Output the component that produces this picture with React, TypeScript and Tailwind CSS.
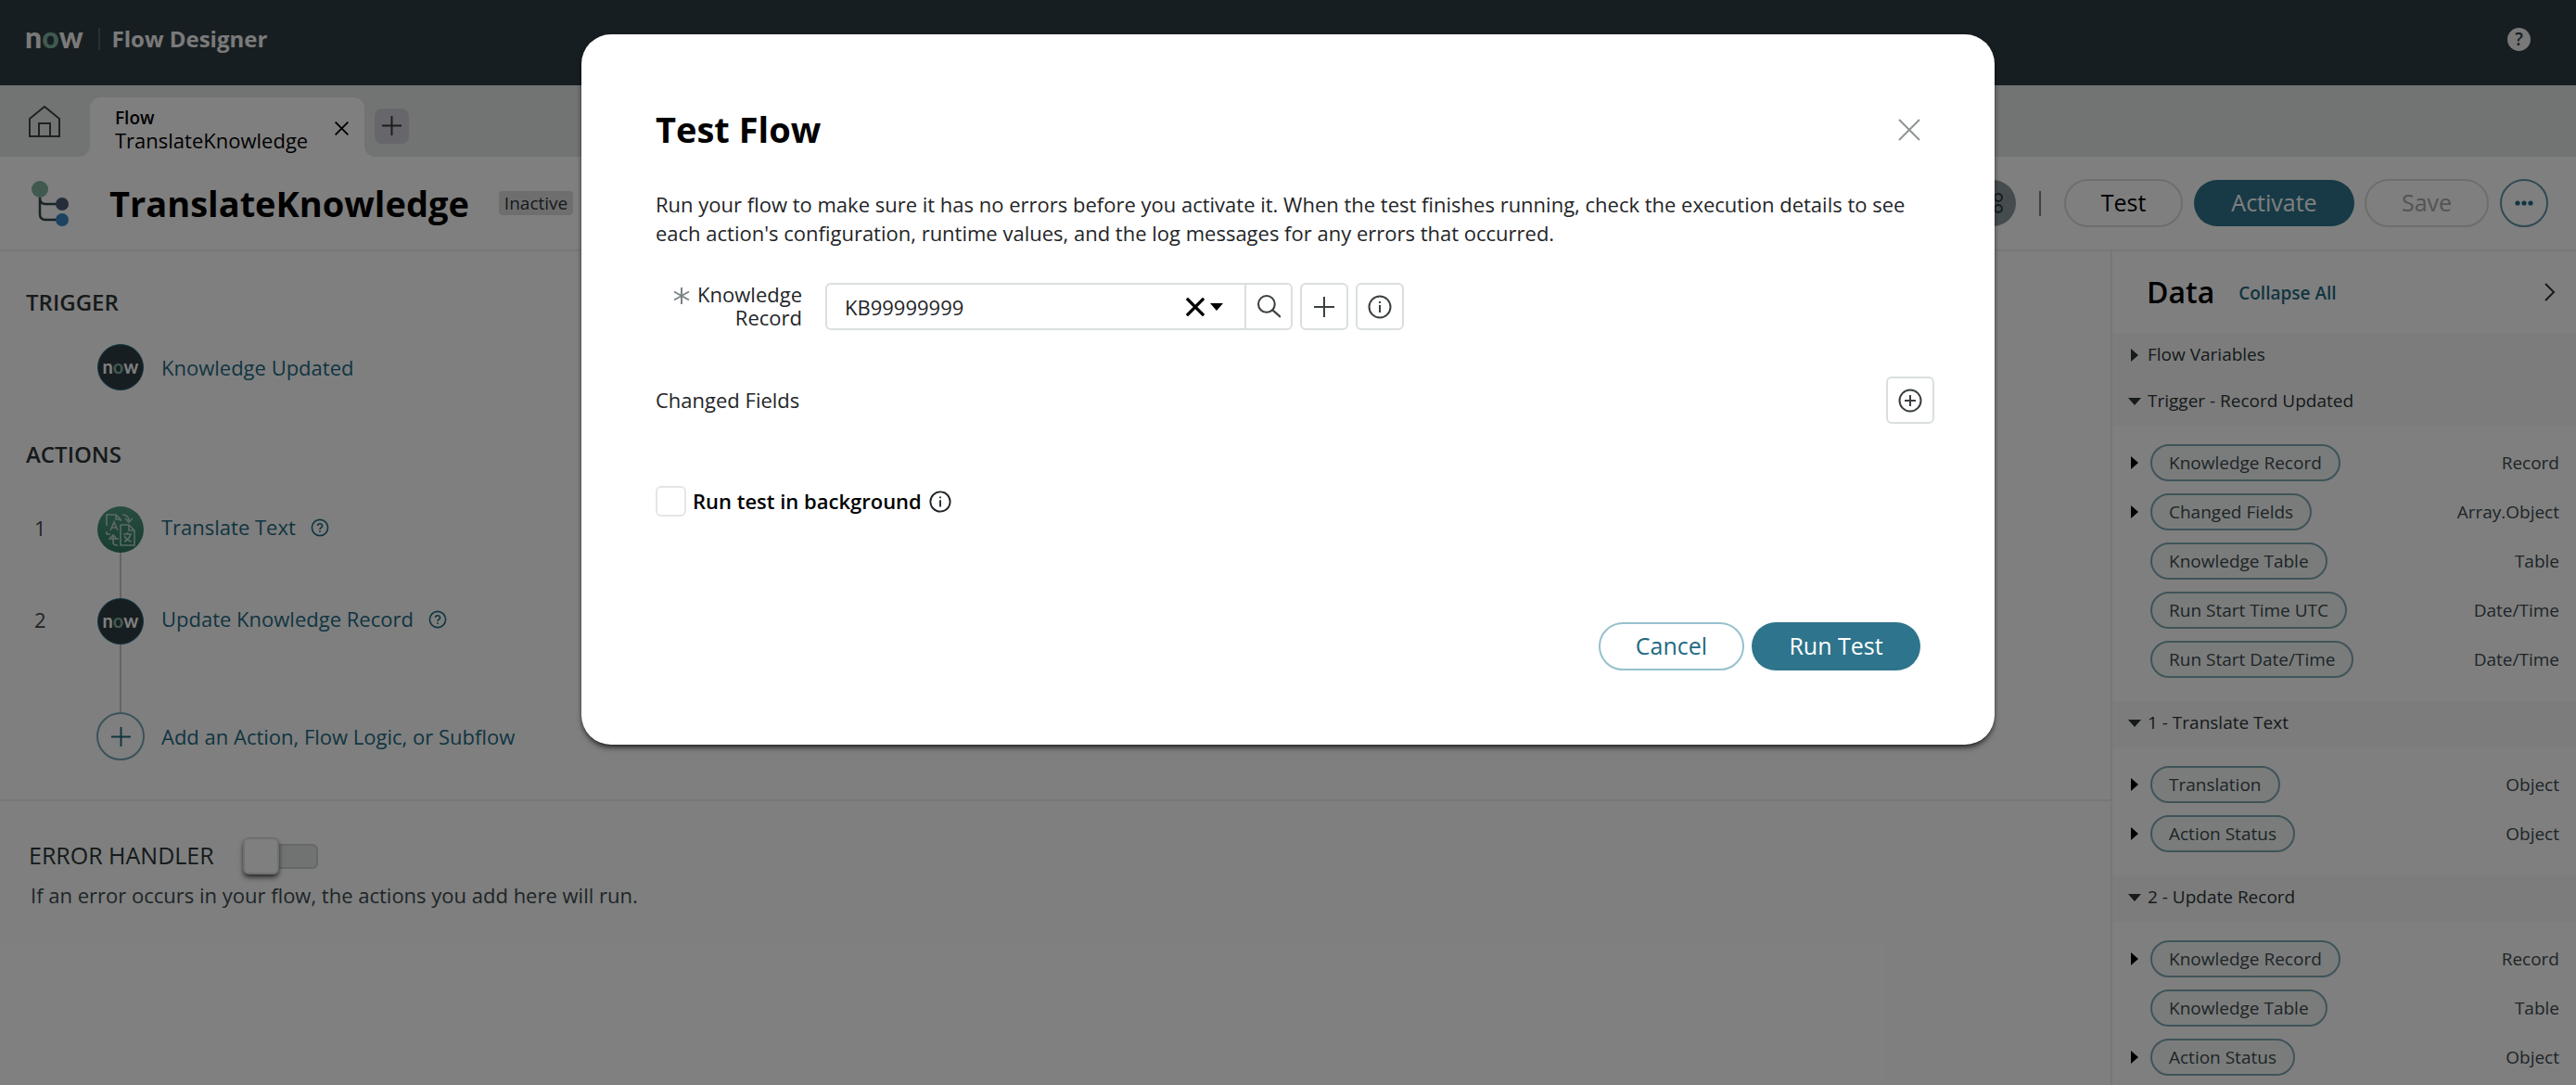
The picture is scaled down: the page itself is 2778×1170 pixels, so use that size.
import React from 'react';

interface PillItem {
  name: string;
  type: string;
  expandable?: boolean;
}

interface DataSection {
  title: string;
  open: boolean;
  items: PillItem[];
}

const sections: DataSection[] = [
  { title: 'Flow Variables', open: false, items: [] },
  {
    title: 'Trigger - Record Updated',
    open: true,
    items: [
      { name: 'Knowledge Record', type: 'Record', expandable: true },
      { name: 'Changed Fields', type: 'Array.Object', expandable: true },
      { name: 'Knowledge Table', type: 'Table' },
      { name: 'Run Start Time UTC', type: 'Date/Time' },
      { name: 'Run Start Date/Time', type: 'Date/Time' },
    ],
  },
  {
    title: '1 - Translate Text',
    open: true,
    items: [
      { name: 'Translation', type: 'Object', expandable: true },
      { name: 'Action Status', type: 'Object', expandable: true },
    ],
  },
  {
    title: '2 - Update Record',
    open: true,
    items: [
      { name: 'Knowledge Record', type: 'Record', expandable: true },
      { name: 'Knowledge Table', type: 'Table' },
      { name: 'Action Status', type: 'Object', expandable: true },
    ],
  },
];

const CrossIcon: React.FC<{ className?: string; strokeWidth?: number }> = ({ className, strokeWidth = 2 }) => (
  <svg viewBox="0 0 24 24" className={className} fill="none" stroke="currentColor" strokeWidth={strokeWidth}>
    <path d="M1 1L23 23M23 1L1 23" />
  </svg>
);

const PlusIcon: React.FC<{ className?: string }> = ({ className }) => (
  <svg viewBox="0 0 22 22" className={className} fill="none" stroke="currentColor" strokeWidth="2">
    <path d="M11 0V22M0 11H22" />
  </svg>
);

const InfoIcon: React.FC<{ className?: string }> = ({ className }) => (
  <svg viewBox="0 0 26 26" className={className} fill="none" stroke="currentColor" strokeWidth="2">
    <circle cx="13" cy="13" r="11.5" />
    <path d="M13 11V19M13 7V9" />
  </svg>
);

const HelpIcon: React.FC<{ className?: string }> = ({ className }) => (
  <svg viewBox="0 0 20 20" className={className} fill="none" stroke="currentColor" strokeWidth="1.6">
    <circle cx="10" cy="10" r="8.6" />
    <path d="M7.5 8a2.5 2.3 0 1 1 3.6 2.1q-1.1.6-1.1 1.9M10 13.2V15" />
  </svg>
);

const Triangle: React.FC<{ open: boolean }> = ({ open }) => (
  <svg viewBox="0 0 14 14" className="h-[14px] w-[14px]" fill="currentColor">
    <path d={open ? 'M0 3H14L7 11Z' : 'M3 0L11 7L3 14Z'} />
  </svg>
);

const NowBadge: React.FC = () => (
  <span className="flex h-[50px] w-[50px] shrink-0 items-center justify-center rounded-full border border-[#27708a] bg-[#2e3d42] pb-[3px] font-['Lato',sans-serif] text-[20px] leading-none font-bold text-white">
    n<span className="text-[#81b5a1]">o</span>w
  </span>
);

const TranslateBadge: React.FC = () => (
  <span className="flex h-[50px] w-[50px] shrink-0 items-center justify-center rounded-full bg-linear-to-b from-[#4f9a80] to-[#2f7a62]">
    <svg viewBox="0 0 32 36" className="h-[36px] w-[32px]" fill="none" stroke="#b9d3c8" strokeWidth="1.6">
      <path d="M1 14V2H11L16 7V9M11 2V7H16" />
      <path d="M5 19L9 10L13 19M6.5 16H11.5" />
      <path d="M16 13H25L31 19V35H16ZM25 13V19H31" />
      <path d="M19 23H28M23.5 21V23M20 31Q25 29 27 23M20 25Q23 30 28 31" />
      <path d="M18 2Q25 2 25 9M21 6L25 10L29 6" />
      <path d="M1 20V23H5M4 28L8 24L12 28M3 28H14M8 25V32Q8 35 13 35" />
    </svg>
  </span>
);

const FlowIcon: React.FC = () => (
  <svg viewBox="0 0 42 50" className="h-[50px] w-[42px]" fill="none">
    <path d="M10 16V37Q10 43 16 43H34M10 19Q10 26 16 26H34" stroke="#33464b" strokeWidth="2.5" />
    <circle cx="10" cy="10" r="9" fill="#81b5a1" />
    <circle cx="34" cy="26" r="7" fill="#4a5874" />
    <circle cx="34" cy="43" r="7" fill="#3b86c0" />
  </svg>
);

const IconButton: React.FC<{ label: string; className?: string; children: React.ReactNode }> = ({
  label,
  className = 'rounded-md',
  children,
}) => (
  <button
    aria-label={label}
    className={`flex h-[51px] w-[52px] items-center justify-center border-2 border-[#dadfde] bg-white text-[#3a3f41] ${className}`}
  >
    {children}
  </button>
);

const Step: React.FC<{ index: number; label: string; icon: React.ReactNode }> = ({ index, label, icon }) => (
  <div className="flex h-[50px] items-center">
    <span className="w-[105px] pb-[4px] pl-[37px] text-[22px] text-[#3c4a4f]">{index}</span>
    {icon}
    <a href="#" className="ml-[19px] pb-[5px] text-[22px] text-[#1f6a83]">{label}</a>
    <button aria-label={`Help for ${label}`} className="ml-[16px] pb-[4px] text-[#1f6a83]">
      <HelpIcon className="h-[20px] w-[20px]" />
    </button>
  </div>
);

const Header: React.FC = () => (
  <header className="flex h-[92px] shrink-0 items-center bg-[#2e3d42] pr-[49px] pb-[8px] pl-[27px]">
    <span className="flex items-end pb-[4px] font-['Lato',sans-serif] text-[32px] leading-none font-black text-[#f4f4f4]">
      n<span className="text-[#81b5a1]">o</span>w
    </span>
    <span className="ml-[16px] h-[24px] w-[2px] bg-[#51636a]" />
    <h1 className="ml-[13px] text-[24px] font-bold text-[#f4f4f4]">Flow Designer</h1>
    <button
      aria-label="Help"
      className="ml-auto flex h-[25px] w-[25px] items-center justify-center rounded-full bg-[#f0f0f0] text-[19px] leading-none font-semibold text-[#2e3d42]"
    >
      ?
    </button>
  </header>
);

const TabBar: React.FC = () => (
  <nav className="flex h-[77px] shrink-0 bg-white">
    <div className="flex w-[97px] items-center rounded-br-xl bg-[#e4e9e7] pl-[31px]">
      <a href="#" aria-label="Home">
        <svg viewBox="0 0 34 34" className="h-[34px] w-[34px]" fill="none" stroke="#3c4447" strokeWidth="2">
          <path d="M1 14L17 1L33 14V33H1ZM11 33V19H23V33" />
        </svg>
      </a>
    </div>
    <div className="bg-[#e4e9e7] pt-[13px]">
      <div className="flex h-full w-[296px] items-center rounded-t-xl bg-white pt-[3px] pr-[17px] pl-[27px]">
        <a href="#" className="flex flex-col leading-[24px] text-black">
          <span className="text-[19px] font-semibold">Flow</span>
          <span className="text-[22px]">TranslateKnowledge</span>
        </a>
        <button aria-label="Close tab" className="ml-auto">
          <CrossIcon className="h-[15px] w-[15px]" strokeWidth={3} />
        </button>
      </div>
    </div>
    <div className="flex flex-1 items-center rounded-bl-xl bg-[#e4e9e7] pt-[10px] pl-[11px]">
      <button aria-label="New tab" className="flex h-[38px] w-[37px] items-center justify-center rounded-lg bg-[#ceced6] text-[#33383a]">
        <PlusIcon className="h-[21px] w-[21px]" />
      </button>
    </div>
  </nav>
);

const TitleBar: React.FC = () => (
  <div className="flex h-[102px] shrink-0 items-center border-b-2 border-[#eef1f0] bg-white pr-[30px] pl-[33px]">
    <FlowIcon />
    <h2 className="ml-[43px] text-[38px] font-bold text-black">TranslateKnowledge</h2>
    <span className="ml-[32px] rounded-sm bg-[#dcdcdc] px-[6px] text-[19px] leading-[26px] text-[#2c3437]">Inactive</span>
    <div className="ml-auto flex items-center">
      <button aria-label="View diagram" className="flex h-[50px] w-[50px] items-center justify-center rounded-full bg-[#8b989b]">
        <svg viewBox="0 0 24 24" className="h-[24px] w-[24px]" fill="none" stroke="#2e3d42" strokeWidth="2">
          <path d="M4 12H14M4 4H14M4 20H14" />
          <circle cx="18" cy="6" r="4" />
          <circle cx="18" cy="18" r="4" />
        </svg>
      </button>
      <span className="mx-[25px] h-[27px] w-[2px] bg-[#7b8487]" />
      <button className="h-[52px] w-[128px] rounded-full border-2 border-[#d6dedd] text-[25px] text-black">Test</button>
      <button className="ml-[12px] h-[50px] w-[173px] rounded-full bg-[#2e748c] text-[25px] text-white">Activate</button>
      <button className="ml-[11px] h-[52px] w-[134px] rounded-full border-2 border-[#d9dddd] text-[25px] text-[#a5a9ab]" disabled>
        Save
      </button>
      <button aria-label="More options" className="ml-[12px] flex h-[52px] w-[52px] items-center justify-center rounded-full border-2 border-[#5e95a8]">
        <svg viewBox="0 0 20 6" className="h-[6px] w-[20px]" fill="#1f6a83">
          <circle cx="3" cy="3" r="2.6" />
          <circle cx="10" cy="3" r="2.6" />
          <circle cx="17" cy="3" r="2.6" />
        </svg>
      </button>
    </div>
  </div>
);

const FlowCanvas: React.FC = () => (
  <main className="min-w-0 flex-1">
    <section className="border-b-2 border-[#eceeee] pt-[39px] pb-[42px]">
      <h3 className="pl-[28px] text-[24px] leading-[32px] font-semibold text-[#2c3437]">TRIGGER</h3>
      <div className="mt-[29px] flex h-[50px] items-center pl-[105px]">
        <NowBadge />
        <a href="#" className="ml-[19px] text-[22px] text-[#1f6a83]">Knowledge Updated</a>
      </div>
      <h3 className="mt-[53px] pl-[28px] text-[24px] leading-[32px] font-semibold text-[#2c3437]">ACTIONS</h3>
      <div className="mt-[40px]">
        <Step index={1} label="Translate Text" icon={<TranslateBadge />} />
        <div className="ml-[129px] h-[49px] w-[2px] bg-[#c9c9c9]" />
        <Step index={2} label="Update Knowledge Record" icon={<NowBadge />} />
        <div className="ml-[129px] h-[73px] w-[2px] bg-[#c9c9c9]" />
        <button className="ml-[104px] flex h-[52px] items-center text-[22px] text-[#1f6a83]">
          <span className="mr-[18px] flex h-[52px] w-[52px] items-center justify-center rounded-full border-2 border-[#76a5b4]">
            <PlusIcon className="h-[21px] w-[21px]" />
          </span>
          Add an Action, Flow Logic, or Subflow
        </button>
      </div>
    </section>
    <section className="pt-[39px] pl-[31px]">
      <label className="flex h-[40px] items-center text-[25px] text-[#2c3437]">
        ERROR HANDLER
        <input type="checkbox" role="switch" className="peer sr-only" />
        <span className="ml-[31px] flex h-[40px] items-center">
          <span className="z-10 h-[40px] w-[39px] rounded-md border-2 border-[#dde1e1] bg-white shadow-md shadow-black/60" />
          <span className="-ml-[3px] h-[27px] w-[45px] rounded-r-md border-2 border-[#c9d0ce] bg-[#e0e6e3]" />
        </span>
      </label>
      <p className="mt-[6px] pl-[2px] text-[22px] leading-[32px] text-[#3c4a4f]">
        If an error occurs in your flow, the actions you add here will run.
      </p>
    </section>
  </main>
);

const DataPanel: React.FC = () => (
  <aside className="w-[502px] shrink-0 overflow-hidden border-l-2 border-[#eceeee] text-[19px]">
    <div className="flex h-[88px] items-center pr-[22px] pl-[37px]">
      <h3 className="text-[32px] font-semibold text-black">Data</h3>
      <button className="ml-[26px] pt-[2px] font-semibold text-[#1f6a83]">Collapse All</button>
      <button aria-label="Hide data panel" className="ml-auto">
        <svg viewBox="0 0 12 20" className="h-[20px] w-[12px]" fill="none" stroke="#2c3437" strokeWidth="2">
          <path d="M1 1L10 10L1 19" />
        </svg>
      </button>
    </div>
    {sections.map((section) => (
      <div key={section.title}>
        <button className="flex h-[50px] w-full items-center bg-[#f8f9f9] pb-[3px] pl-[17px] text-[#2c3437]">
          <Triangle open={section.open} />
          <span className="ml-[7px]">{section.title}</span>
        </button>
        {section.items.length > 0 && (
          <ul className="flex flex-col gap-[13px] pt-[20px] pr-[18px] pb-[25px] pl-[17px]">
            {section.items.map((item) => (
              <li key={item.name} className="flex items-center text-[#3c4a4f]">
                <span className="w-[24px] text-black">{item.expandable && <Triangle open={false} />}</span>
                <span className="h-[40px] rounded-full border-2 border-[#7fa8b4] bg-[#f4f8f7] px-[18px] leading-[37px]">{item.name}</span>
                <span className="ml-auto">{item.type}</span>
              </li>
            ))}
          </ul>
        )}
      </div>
    ))}
  </aside>
);

const TestFlowDialog: React.FC = () => (
  <div
    role="dialog"
    aria-modal="true"
    aria-labelledby="test-flow-title"
    className="w-full max-w-[1524px] rounded-[32px] bg-white px-[80px] pt-[77px] pb-[80px] text-[22px] text-[#1f2527] shadow-md shadow-black/60"
  >
    <div className="flex h-[52px] items-center justify-between">
      <h2 id="test-flow-title" className="pb-[2px] text-[38px] font-bold text-black">Test Flow</h2>
      <button aria-label="Close" className="text-[#8f9496]">
        <CrossIcon className="h-[24px] w-[24px]" />
      </button>
    </div>
    <p className="mt-[39px] leading-[31px]">
      Run your flow to make sure it has no errors before you activate it. When the test finishes running, check the execution
      details to see each action&apos;s configuration, runtime values, and the log messages for any errors that occurred.
    </p>

    <div className="mt-[38px] flex">
      <div className="flex w-[158px] justify-end">
        <svg viewBox="0 0 18 18" className="mt-[5px] mr-[8px] h-[18px] w-[18px]" stroke="#7b8487" strokeWidth="2">
          <path d="M9 0V18M1 4.5L17 13.5M17 4.5L1 13.5" />
        </svg>
        <label htmlFor="record" className="text-right leading-[25px]">
          Knowledge<br />Record
        </label>
      </div>
      <div className="ml-[25px] flex h-[51px] w-[454px] items-center rounded-l-md border-2 border-[#dadfde] pr-[23px]">
        <input id="record" type="text" defaultValue="KB99999999" className="h-full min-w-0 flex-1 pl-[19px] outline-none" />
        <button aria-label="Clear value" className="text-black">
          <CrossIcon className="h-[20px] w-[20px]" strokeWidth={4} />
        </button>
        <button aria-label="Show options" className="ml-[6px] text-black">
          <svg viewBox="0 0 14 8" className="h-[8px] w-[14px]" fill="currentColor">
            <path d="M0 0H14L7 8Z" />
          </svg>
        </button>
      </div>
      <IconButton label="Look up record" className="-ml-[2px] rounded-r-md">
        <svg viewBox="0 0 24 24" className="h-[25px] w-[25px]" fill="none" stroke="currentColor" strokeWidth="2">
          <circle cx="9.5" cy="9.5" r="8.5" />
          <path d="M15.5 15.5L24 23" />
        </svg>
      </IconButton>
      <div className="ml-[8px] flex gap-[8px]">
        <IconButton label="New record">
          <PlusIcon className="h-[22px] w-[22px]" />
        </IconButton>
        <IconButton label="Record details">
          <InfoIcon className="h-[26px] w-[26px]" />
        </IconButton>
      </div>
    </div>

    <div className="mt-[50px] -mr-[15px] flex items-center justify-between">
      <span>Changed Fields</span>
      <IconButton label="Add changed field">
        <svg viewBox="0 0 26 26" className="h-[26px] w-[26px]" fill="none" stroke="currentColor" strokeWidth="2">
          <circle cx="13" cy="13" r="11.5" />
          <path d="M13 7V19M7 13H19" />
        </svg>
      </IconButton>
    </div>

    <div className="mt-[67px] flex h-[33px] items-center">
      <input id="background" type="checkbox" className="h-[33px] w-[33px] appearance-none rounded-md border-2 border-[#e3e6e6] bg-white" />
      <label htmlFor="background" className="ml-[7px] font-semibold text-black">Run test in background</label>
      <button aria-label="About background tests" className="ml-[8px]">
        <InfoIcon className="h-[24px] w-[24px]" />
      </button>
    </div>

    <div className="mt-[114px] flex justify-end gap-[8px] text-[25px]">
      <button className="h-[52px] w-[157px] rounded-full border-2 border-[#97c1cd] text-[#1f6a83]">Cancel</button>
      <button className="h-[52px] w-[182px] rounded-full bg-[#2e748c] text-white">Run Test</button>
    </div>
  </div>
);

const App: React.FC = () => (
  <div className="relative flex h-screen flex-col overflow-hidden bg-white font-['Open_Sans',sans-serif]">
    <Header />
    <TabBar />
    <TitleBar />
    <div className="flex min-h-0 flex-1">
      <FlowCanvas />
      <DataPanel />
    </div>
    <div className="absolute inset-0 z-20 flex items-start justify-center bg-black/50 pt-[37px]">
      <TestFlowDialog />
    </div>
  </div>
);

export default App;
